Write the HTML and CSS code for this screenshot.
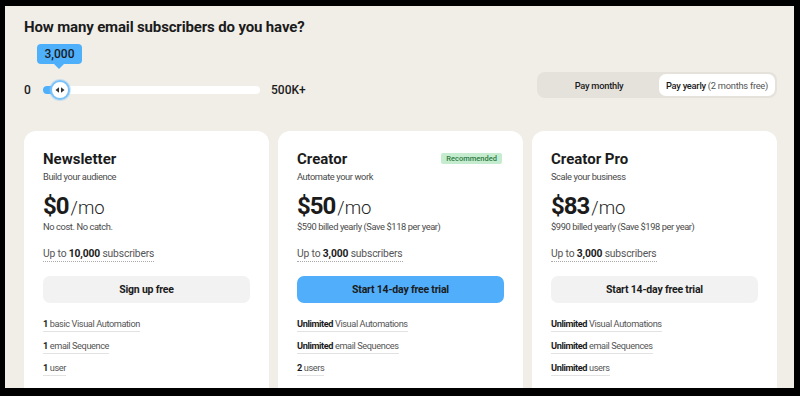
FILE: index.html
```html
<!DOCTYPE html>
<html>
<head>
<meta charset="utf-8">
<link rel="stylesheet" href="styles.css">
</head>
<body>
<div class="frame">
  <h1 class="heading">How many email subscribers do you have?</h1>
  <div class="controls">
    <div class="slider-block">
      <div class="tip-wrap"><div class="tip">3,000</div></div>
      <div class="slider-row">
        <span class="min">0</span>
        <div class="track">
          <div class="fill"></div>
          <div class="thumb">
            <svg width="10" height="6" viewBox="0 0 10 6"><path d="M0.5 3 L4 0.3 L4 5.7 Z" fill="#333"/><path d="M9.5 3 L6 0.3 L6 5.7 Z" fill="#333"/></svg>
          </div>
        </div>
        <span class="max">500K+</span>
      </div>
    </div>
    <div class="toggle">
      <div class="opt">Pay monthly</div>
      <div class="opt active">Pay yearly <span class="light">(2 months free)</span></div>
    </div>
  </div>
  <div class="cards">
    <div class="card">
      <div class="title-row"><h2 class="title">Newsletter</h2></div>
      <p class="sub">Build your audience</p>
      <div class="price"><span class="amt">$0</span><span class="per">/mo</span></div>
      <p class="note">No cost. No catch.</p>
      <p class="subs"><span class="dotted">Up to <b>10,000</b> subscribers</span></p>
      <button class="btn">Sign up free</button>
      <ul class="feats">
        <li><span><b>1</b> basic Visual Automation</span></li>
        <li><span><b>1</b> email Sequence</span></li>
        <li><span><b>1</b> user</span></li>
      </ul>
    </div>
    <div class="card">
      <div class="title-row"><h2 class="title">Creator</h2><span class="badge">Recommended</span></div>
      <p class="sub">Automate your work</p>
      <div class="price"><span class="amt">$50</span><span class="per">/mo</span></div>
      <p class="note">$590 billed yearly (Save $118 per year)</p>
      <p class="subs"><span class="dotted">Up to <b>3,000</b> subscribers</span></p>
      <button class="btn primary">Start 14-day free trial</button>
      <ul class="feats">
        <li><span><b>Unlimited</b> Visual Automations</span></li>
        <li><span><b>Unlimited</b> email Sequences</span></li>
        <li><span><b>2</b> users</span></li>
      </ul>
    </div>
    <div class="card">
      <div class="title-row"><h2 class="title">Creator Pro</h2></div>
      <p class="sub">Scale your business</p>
      <div class="price"><span class="amt">$83</span><span class="per">/mo</span></div>
      <p class="note">$990 billed yearly (Save $198 per year)</p>
      <p class="subs"><span class="dotted">Up to <b>3,000</b> subscribers</span></p>
      <button class="btn">Start 14-day free trial</button>
      <ul class="feats">
        <li><span><b>Unlimited</b> Visual Automations</span></li>
        <li><span><b>Unlimited</b> email Sequences</span></li>
        <li><span><b>Unlimited</b> users</span></li>
      </ul>
    </div>
  </div>
</div>
</body>
</html>
```
FILE: styles.css
```css
* { box-sizing: border-box; }
html, body { margin: 0; padding: 0; background: #000; }
body { font-family: Roboto, "Liberation Sans", sans-serif; color: #1b1b1b; overflow: hidden; }
.frame {
  margin: 6px 6px 0 5px;
  height: 382px;
  background: #f1eee8;
  padding: 11px 17px 0 19px;
  overflow: hidden;
}
.heading { margin: 0; font-size: 15px; line-height: 20px; font-weight: 700; letter-spacing: -0.15px; }
.controls { display: flex; justify-content: space-between; align-items: flex-end; margin-top: 7px; }
.tip-wrap { padding-left: 13px; }
.tip {
  position: relative;
  width: 45px; height: 20px;
  background: #4eaffa;
  border-radius: 4px;
  font-size: 12px; line-height: 20px; font-weight: 500;
  text-align: center;
  color: #1b1b1b;
}
.tip::after {
  content: "";
  position: absolute;
  left: 17px; top: 20px;
  border-left: 5px solid transparent;
  border-right: 5px solid transparent;
  border-top: 5px solid #4eaffa;
}
.slider-row { display: flex; align-items: center; height: 20px; margin-top: 16px; }
.min { width: 19px; font-size: 12px; font-weight: 500; }
.track { position: relative; width: 217px; height: 8px; background: #fff; border-radius: 4px; }
.fill { width: 17px; height: 8px; background: #4eaffa; border-radius: 4px 0 0 4px; }
.thumb {
  position: absolute;
  left: 7px; top: -6px;
  width: 20px; height: 20px;
  border-radius: 50%;
  background: #fff;
  border: 2px solid #7cc2fa;
  box-shadow: 0 0 0 1px rgba(124,194,250,0.35);
  display: flex; align-items: center; justify-content: center;
}
.max { margin-left: 11px; font-size: 12px; font-weight: 500; }
.toggle {
  display: flex;
  width: 240px; height: 26px;
  background: #e5e2dc;
  border-radius: 8px;
  padding: 2px;
  margin-bottom: 2px;
}
.opt { flex: 0 0 120px; display: flex; align-items: center; justify-content: center; font-size: 9.3px; font-weight: 500; letter-spacing: -0.25px; border-radius: 7px; }
.opt.active { flex: 0 0 116px; margin-left: auto; background: #fff; }
.light { font-weight: 400; color: #555; margin-left: 2px; }
.cards { display: flex; gap: 9px; margin-top: 31px; }
.card {
  flex: 0 0 245px;
  height: 280px;
  background: #fff;
  border-radius: 12px;
  padding: 18px 19px 0 19px;
}
.title-row { display: flex; justify-content: space-between; align-items: center; }
.title { margin: 0; font-size: 15px; line-height: 20px; font-weight: 700; }
.badge {
  background: #c6ecd0;
  color: #2b7a41;
  font-size: 7.5px;
  font-weight: 500;
  line-height: 11px;
  padding: 0 5px;
  border-radius: 2px;
  margin-right: 2px;
  margin-top: -2px;
}
.sub { margin: 1px 0 0; font-size: 9.3px; line-height: 14px; color: #4a4a4a; letter-spacing: -0.4px; }
.price { margin-top: 8px; height: 28px; display: flex; align-items: baseline; }
.amt { font-size: 24px; line-height: 28px; font-weight: 700; letter-spacing: -1px; }
.per { font-size: 18.5px; font-weight: 300; margin-left: 2px; color: #222; }
.note { margin: 0; font-size: 9.3px; line-height: 14px; color: #4a4a4a; letter-spacing: -0.4px; }
.subs { margin: 12px 0 0; font-size: 10.3px; line-height: 16px; color: #555; letter-spacing: -0.15px; }
.subs b { color: #1b1b1b; font-weight: 700; }
.dotted { border-bottom: 1px dotted #aaa; padding-bottom: 1px; }
.btn {
  display: block;
  width: 100%;
  height: 27px;
  margin-top: 14px;
  border: none;
  border-radius: 7px;
  background: #f2f2f2;
  font-family: inherit;
  font-size: 10.5px;
  font-weight: 700;
  color: #1b1b1b;
  letter-spacing: -0.2px;
}
.btn.primary { background: #50aefb; }
.feats { list-style: none; margin: 14px 0 0; padding: 0; }
.feats li { font-size: 9.2px; line-height: 14px; margin-bottom: 8px; color: #555; letter-spacing: -0.4px; }
.feats li span { border-bottom: 1px solid #e2e2e2; padding-bottom: 2px; }
.feats b { color: #1b1b1b; font-weight: 700; }
```
